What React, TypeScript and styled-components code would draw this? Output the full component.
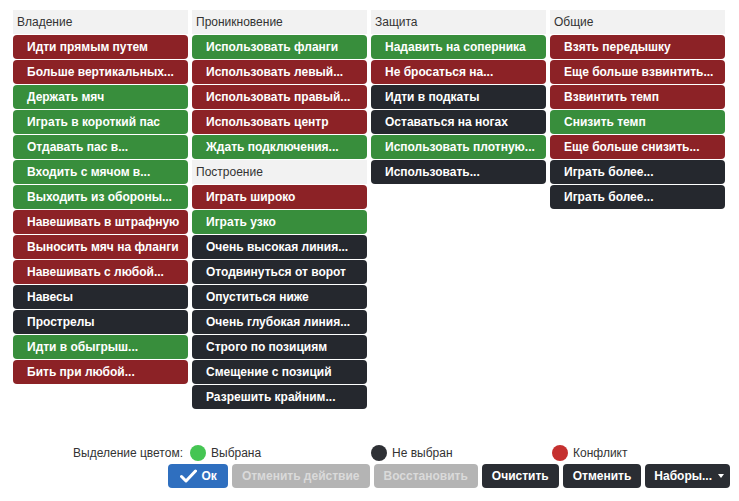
import styled, { createGlobalStyle } from 'styled-components';

type Tone = 'red' | 'green' | 'dark';

const tones: Record<Tone, string> = {
  red: '#8c2226',
  green: '#388e3c',
  dark: '#25282e',
};

const GlobalStyle = createGlobalStyle`
  html, body {
    margin: 0;
    padding: 0;
    background: #ffffff;
    font-family: "Liberation Sans", Arial, sans-serif;
  }
`;

const Page = styled.div`
  width: 739px;
  height: 501px;
  display: flex;
  flex-direction: column;
  box-sizing: border-box;
  padding: 10px 0 13px 0;
`;

const Board = styled.div`
  flex: 1;
  display: grid;
  grid-template-columns: repeat(4, 175px);
  column-gap: 4px;
  align-items: start;
  padding-left: 13px;
`;

const Column = styled.div`
  display: flex;
  flex-direction: column;
  gap: 1px;
`;

const GroupTitle = styled.div`
  height: 24px;
  line-height: 24px;
  background: #f2f2f2;
  color: #333333;
  font-size: 12px;
  padding-left: 4px;
`;

const Tactic = styled.div<{ $tone: Tone }>`
  height: 24px;
  line-height: 24px;
  border-radius: 4px;
  background: ${(p) => tones[p.$tone]};
  color: #ffffff;
  font-size: 12px;
  font-weight: bold;
  padding-left: 14px;
  white-space: nowrap;
  overflow: hidden;
  cursor: pointer;
`;

const Legend = styled.div`
  height: 20px;
  display: grid;
  grid-template-columns: repeat(4, 181px);
  padding-left: 9px;
  align-items: center;
  font-size: 12px;
  color: #333333;
  margin-bottom: 1px;
`;

const LegendLabel = styled.div`
  text-align: right;
  padding-right: 7px;
`;

const LegendItem = styled.div`
  display: flex;
  align-items: center;
  gap: 5px;
`;

const Dot = styled.span<{ $color: string }>`
  width: 16px;
  height: 16px;
  border-radius: 50%;
  background: ${(p) => p.$color};
  display: inline-block;
`;

const Actions = styled.div`
  display: flex;
  justify-content: flex-end;
  gap: 4px;
  padding-right: 9px;
`;

const ActionButton = styled.button<{ $kind: 'primary' | 'disabled' | 'dark' }>`
  height: 24px;
  border: none;
  border-radius: 4px;
  padding: 0 ${(p) => (p.$kind === 'primary' ? '11px 0 12px' : '10px')};
  font-family: inherit;
  font-size: 12px;
  font-weight: bold;
  display: inline-flex;
  align-items: center;
  gap: 5px;
  background: ${(p) =>
    p.$kind === 'primary' ? '#2f6fbf' : p.$kind === 'disabled' ? '#b4b4b4' : '#2a2d33'};
  color: ${(p) => (p.$kind === 'disabled' ? '#dadada' : '#ffffff')};
`;

const MenuButton = styled(ActionButton)`
  gap: 6px;
  padding: 0 6px 0 9px;
`;

const Caret = styled.span`
  width: 0;
  height: 0;
  border-left: 3.5px solid transparent;
  border-right: 3.5px solid transparent;
  border-top: 4px solid #ffffff;
`;

type Entry = [string, Tone] | { title: string };

const columns: Entry[][] = [
  [
    { title: 'Владение' },
    ['Идти прямым путем', 'red'],
    ['Больше вертикальных...', 'red'],
    ['Держать мяч', 'green'],
    ['Играть в короткий пас', 'green'],
    ['Отдавать пас в...', 'green'],
    ['Входить с мячом в...', 'green'],
    ['Выходить из обороны...', 'green'],
    ['Навешивать в штрафную', 'red'],
    ['Выносить мяч на фланги', 'red'],
    ['Навешивать с любой...', 'red'],
    ['Навесы', 'dark'],
    ['Прострелы', 'dark'],
    ['Идти в обыгрыш...', 'green'],
    ['Бить при любой...', 'red'],
  ],
  [
    { title: 'Проникновение' },
    ['Использовать фланги', 'green'],
    ['Использовать левый...', 'red'],
    ['Использовать правый...', 'red'],
    ['Использовать центр', 'red'],
    ['Ждать подключения...', 'green'],
    { title: 'Построение' },
    ['Играть широко', 'red'],
    ['Играть узко', 'green'],
    ['Очень высокая линия...', 'dark'],
    ['Отодвинуться от ворот', 'dark'],
    ['Опуститься ниже', 'dark'],
    ['Очень глубокая линия...', 'dark'],
    ['Строго по позициям', 'dark'],
    ['Смещение с позиций', 'dark'],
    ['Разрешить крайним...', 'dark'],
  ],
  [
    { title: 'Защита' },
    ['Надавить на соперника', 'green'],
    ['Не бросаться на...', 'red'],
    ['Идти в подкаты', 'dark'],
    ['Оставаться на ногах', 'dark'],
    ['Использовать плотную...', 'green'],
    ['Использовать...', 'dark'],
  ],
  [
    { title: 'Общие' },
    ['Взять передышку', 'red'],
    ['Еще больше взвинтить...', 'red'],
    ['Взвинтить темп', 'red'],
    ['Снизить темп', 'green'],
    ['Еще больше снизить...', 'red'],
    ['Играть более...', 'dark'],
    ['Играть более...', 'dark'],
  ],
];

const CheckIcon = () => (
  <svg width="17" height="14" viewBox="0 0 17 14">
    <path d="M1.5 7.5 L6 12 L15.5 2" fill="none" stroke="#ffffff" strokeWidth="3" strokeLinecap="round" strokeLinejoin="round" />
  </svg>
);

export default function App() {
  return (
    <>
      <GlobalStyle />
      <Page>
        <Board>
          {columns.map((col, i) => (
            <Column key={i}>
              {col.map((entry, j) =>
                Array.isArray(entry) ? (
                  <Tactic key={j} $tone={entry[1]}>
                    {entry[0]}
                  </Tactic>
                ) : (
                  <GroupTitle key={j}>{entry.title}</GroupTitle>
                )
              )}
            </Column>
          ))}
        </Board>
        <Legend>
          <LegendLabel>Выделение цветом:</LegendLabel>
          <LegendItem>
            <Dot $color="#45c553" />
            Выбрана
          </LegendItem>
          <LegendItem>
            <Dot $color="#2e3035" />
            Не выбран
          </LegendItem>
          <LegendItem>
            <Dot $color="#c5302f" />
            Конфликт
          </LegendItem>
        </Legend>
        <Actions>
          <ActionButton $kind="primary">
            <CheckIcon />
            Ок
          </ActionButton>
          <ActionButton $kind="disabled">Отменить действие</ActionButton>
          <ActionButton $kind="disabled">Восстановить</ActionButton>
          <ActionButton $kind="dark">Очистить</ActionButton>
          <ActionButton $kind="dark">Отменить</ActionButton>
          <MenuButton $kind="dark">
            Наборы...
            <Caret />
          </MenuButton>
        </Actions>
      </Page>
    </>
  );
}
